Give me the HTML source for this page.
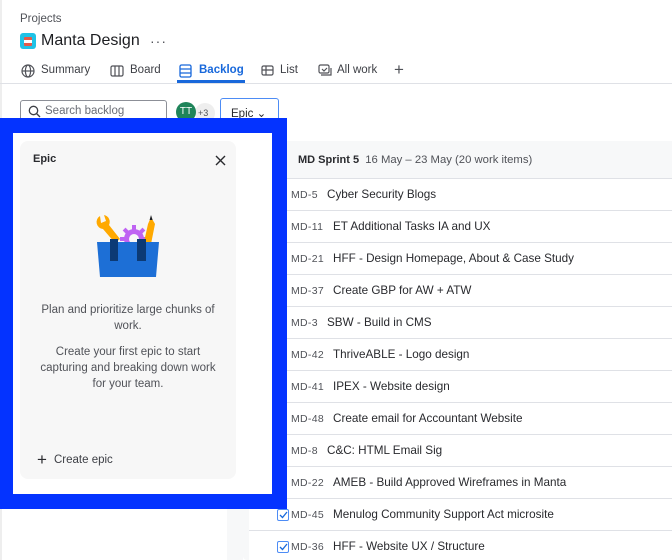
<!DOCTYPE html>
<html><head><meta charset="utf-8"><style>
*{box-sizing:border-box;margin:0;padding:0}
html,body{width:672px;height:560px;overflow:hidden}
body{background:#fff;font-family:"Liberation Sans",Arial,sans-serif;color:#292a2e;position:relative}
.a{position:absolute;white-space:nowrap}
.row{position:absolute;left:249px;width:423px;height:32px;border-top:1px solid #dfe1e6;background:#fff}
.row .k{position:absolute;left:42px;top:10px;font-size:10.5px;color:#505258;letter-spacing:.3px}
.row .t{position:absolute;top:9px;font-size:11.7px;color:#292a2e}
.cb{position:absolute;left:28px;top:10px;width:12px;height:12px;border:1.5px solid #4d8cf5;border-radius:2px}
</style></head><body>
<div class="a" style="left:0;top:0;width:2px;height:560px;background:#eee"></div>
<div class="a" style="left:20px;top:13px;font-size:11.5px;color:#505258">Projects</div>
<div class="a" style="left:20px;top:33px;width:16px;height:16px;background:#1fc2e6;border-radius:3px"><div style="position:absolute;left:4px;top:4px;width:8px;height:9px;background:#e35a4a;border-radius:1px"></div><div style="position:absolute;left:4px;top:7px;width:8px;height:3px;background:#fff"></div></div>
<div class="a" style="left:41px;top:32px;font-size:16px;color:#1d1e22">Manta Design</div>
<div class="a" style="left:150px;top:33px;font-size:14px;color:#505258;letter-spacing:1px">···</div>
<svg class="a" style="left:21px;top:64px" width="14" height="14" viewBox="0 0 14 14" fill="none" stroke="#505258" stroke-width="1.2"><circle cx="7" cy="7" r="6"/><ellipse cx="7" cy="7" rx="2.6" ry="6"/><path d="M1 7h12"/></svg>
<div class="a" style="left:41px;top:64px;font-size:11.5px;color:#3d3f45">Summary</div>
<svg class="a" style="left:110px;top:65px" width="14" height="12" viewBox="0 0 14 12" fill="none" stroke="#505258" stroke-width="1.2"><rect x="1" y="1" width="12" height="10" rx="1.5"/><path d="M5 1v10M9 1v10"/></svg>
<div class="a" style="left:130px;top:64px;font-size:11.5px;color:#3d3f45">Board</div>
<svg class="a" style="left:179px;top:64px" width="13" height="14" viewBox="0 0 13 14" fill="none" stroke="#1868db" stroke-width="1.3"><rect x="1" y="1" width="11" height="12" rx="1.5"/><path d="M1 5h11M1 9h11"/></svg>
<div class="a" style="left:199px;top:64px;font-size:11.5px;color:#1868db;font-weight:bold">Backlog</div>
<div class="a" style="left:177px;top:80px;width:68px;height:3px;background:#1868db"></div>
<svg class="a" style="left:261px;top:65px" width="13" height="11" viewBox="0 0 13 11" fill="none" stroke="#505258" stroke-width="1.2"><rect x="1" y="1" width="11" height="9" rx="1.5"/><path d="M1 5h11M5 1v9"/></svg>
<div class="a" style="left:280px;top:64px;font-size:11.5px;color:#3d3f45">List</div>
<svg class="a" style="left:318px;top:64px" width="14" height="13" viewBox="0 0 14 13" fill="none" stroke="#505258" stroke-width="1.2"><rect x="1" y="1" width="10" height="8" rx="1.5"/><path d="M3 11h10V4M4 5l2 2 3-3"/></svg>
<div class="a" style="left:337px;top:64px;font-size:11.5px;color:#3d3f45">All work</div>
<div class="a" style="left:394px;top:60px;font-size:17px;color:#505258">+</div>
<div class="a" style="left:0;top:83px;width:672px;height:1px;background:#dfe1e6"></div>
<div class="a" style="left:20px;top:100px;width:147px;height:24px;border:1px solid #8c8f97;border-radius:3px"></div>
<svg class="a" style="left:28px;top:105px" width="13" height="13" viewBox="0 0 13 13" fill="none" stroke="#3d3f45" stroke-width="1.3"><circle cx="5.5" cy="5.5" r="4.2"/><path d="M8.5 8.5l3.5 3.5"/></svg>
<div class="a" style="left:45px;top:105px;font-size:11.5px;color:#6b6e76">Search backlog</div>
<div class="a" style="left:195px;top:103px;width:20px;height:20px;border-radius:50%;background:#eee"></div>
<div class="a" style="left:176px;top:102px;width:20px;height:20px;border-radius:50%;background:#1f845a;color:#fff;font-size:10px;text-align:center;line-height:20px">TT</div>
<div class="a" style="left:198px;top:108px;font-size:9px;color:#505258">+3</div>
<div class="a" style="left:220px;top:98px;width:59px;height:30px;border:1px solid #4d8cf5;border-radius:3px;background:#fff"></div>
<div class="a" style="left:231px;top:106px;font-size:11.5px;color:#292a2e">Epic ⌄</div>

<div class="a" style="left:227px;top:130px;width:16px;height:430px;background:#f7f8f9"></div>
<div class="a" style="left:243px;top:141px;width:440px;height:419px;background:#f7f8f9;border-radius:4px"></div>
<div class="a" style="left:298px;top:154px;font-size:11px;color:#292a2e"><b>MD Sprint 5</b>&nbsp; <span style="color:#505258;font-size:11.3px">16 May – 23 May (20 work items)</span></div>

<div class="row" style="top:178px"><span class="k">MD-5</span><span class="t" style="left:78px">Cyber Security Blogs</span></div>
<div class="row" style="top:210px"><span class="k">MD-11</span><span class="t" style="left:84px">ET Additional Tasks IA and UX</span></div>
<div class="row" style="top:242px"><span class="k">MD-21</span><span class="t" style="left:84px">HFF - Design Homepage, About &amp; Case Study</span></div>
<div class="row" style="top:274px"><span class="k">MD-37</span><span class="t" style="left:84px">Create GBP for AW + ATW</span></div>
<div class="row" style="top:306px"><span class="k">MD-3</span><span class="t" style="left:78px">SBW - Build in CMS</span></div>
<div class="row" style="top:338px"><span class="k">MD-42</span><span class="t" style="left:84px">ThriveABLE - Logo design</span></div>
<div class="row" style="top:370px"><span class="k">MD-41</span><span class="t" style="left:84px">IPEX - Website design</span></div>
<div class="row" style="top:402px"><span class="k">MD-48</span><span class="t" style="left:84px">Create email for Accountant Website</span></div>
<div class="row" style="top:434px"><span class="k">MD-8</span><span class="t" style="left:78px">C&amp;C: HTML Email Sig</span></div>
<div class="row" style="top:466px"><span class="k">MD-22</span><span class="t" style="left:84px">AMEB - Build Approved Wireframes in Manta</span></div>
<div class="row" style="top:498px"><span class="cb"></span><svg class="a" style="left:30px;top:12px" width="9" height="8" viewBox="0 0 9 8" fill="none" stroke="#1868db" stroke-width="1.3"><path d="M1 4l2.5 2.5L8 1"/></svg><span class="k">MD-45</span><span class="t" style="left:84px">Menulog Community Support Act microsite</span></div>
<div class="row" style="top:530px"><span class="cb"></span><svg class="a" style="left:30px;top:12px" width="9" height="8" viewBox="0 0 9 8" fill="none" stroke="#1868db" stroke-width="1.3"><path d="M1 4l2.5 2.5L8 1"/></svg><span class="k">MD-36</span><span class="t" style="left:84px">HFF - Website UX / Structure</span></div>

<div class="a" style="left:0;top:118px;width:287px;height:391px;border:solid #0433ff;border-width:15px 15px 15px 13px;background:#fff"></div>
<div class="a" style="left:20px;top:141px;width:216px;height:338px;background:#f7f7f7;border-radius:8px"></div>
<div class="a" style="left:33px;top:153px;font-size:11px;font-weight:bold;color:#292a2e">Epic</div>
<svg class="a" style="left:215px;top:155px" width="11" height="11" viewBox="0 0 11 11" stroke="#292a2e" stroke-width="1.4"><path d="M1 1l9 9M10 1l-9 9"/></svg>
<svg class="a" style="left:94px;top:212px" width="66" height="66" viewBox="0 0 66 66">
<g fill="#bf63f3"><circle cx="40" cy="27" r="10"/><rect x="38" y="13" width="4" height="28"/><rect x="26" y="25" width="28" height="4"/><rect x="38" y="13" width="4" height="28" transform="rotate(45 40 27)"/><rect x="38" y="13" width="4" height="28" transform="rotate(-45 40 27)"/></g>
<circle cx="40" cy="27" r="5" fill="#f7f7f7"/>
<path d="M6 4a7 7 0 0 0 3 13l12 14 5-4-11-14a7 7 0 0 0-5-10l2 6-5 2z" fill="#ffa900"/>
<path d="M57 5l4 7-4 20-7-2 4-18z" fill="#ffa900"/><path d="M57 3l1.6 5-3 0z" fill="#1d1e22"/>
<path d="M3 30h62l-3 35H6z" fill="#1d6fd6"/>
<rect x="16" y="27" width="8" height="22" fill="#0c3a75"/><rect x="43" y="27" width="9" height="22" fill="#0c3a75"/>
</svg>
<div class="a" style="left:20px;top:302px;width:216px;text-align:center;white-space:normal;font-size:11.5px;line-height:16px;color:#505258;padding:0 12px">Plan and prioritize large chunks of work.</div>
<div class="a" style="left:20px;top:344px;width:216px;text-align:center;white-space:normal;font-size:11.5px;line-height:16px;color:#505258;padding:0 14px">Create your first epic to start capturing and breaking down work for your team.</div>
<div class="a" style="left:37px;top:450px;font-size:17px;color:#292a2e">+</div>
<div class="a" style="left:54px;top:454px;font-size:11.5px;color:#3d3f45">Create epic</div>
</body></html>
